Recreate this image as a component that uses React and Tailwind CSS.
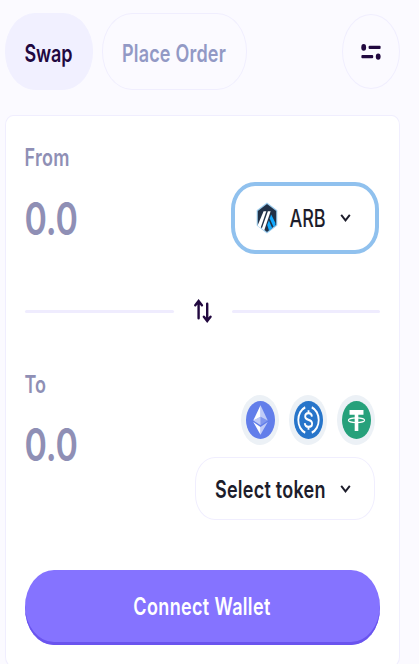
import React, { useState } from "react";
import clsx from "clsx";

const Label = ({ className, children }) => (
  <span
    className={clsx(
      "inline-block whitespace-nowrap leading-6 scale-y-[1.33]",
      className
    )}
  >
    {children}
  </span>
);

const Chevron = () => (
  <svg width="11" height="10" viewBox="0 0 11 10" fill="none">
    <path d="M1.2 1.8 5.5 7.4 9.8 1.8" stroke="#1d1d2b" strokeWidth="1.9" />
  </svg>
);

const SettingsIcon = () => (
  <svg width="20" height="16" viewBox="0 0 20 16" fill="#21083f">
    <ellipse cx="2.7" cy="3.4" rx="2.4" ry="3.3" />
    <rect x="7.6" y="1.8" width="12" height="3.2" rx="1" />
    <rect x="0.4" y="11" width="11.8" height="3.2" rx="1" />
    <ellipse cx="17.2" cy="12.6" rx="2.4" ry="3.2" />
  </svg>
);

const SwapArrows = () => (
  <svg
    width="18"
    height="24"
    viewBox="0 0 18 24"
    fill="none"
    stroke="#21083f"
    strokeWidth="2.4"
    strokeLinecap="round"
  >
    <path d="M4.6 19.2V2.2M1.3 6.2 4.6 2 7.9 6.2" />
    <path d="M13.2 4.8V21.8M9.9 17.8 13.2 22 16.5 17.8" />
  </svg>
);

const ArbIcon = () => (
  <svg width="22" height="32" viewBox="0 0 22 32">
    <path d="M11 .5 21.3 8.2V23.5L11 31.5 .7 23.5V8.2Z" fill="#9dccec" />
    <path d="M11 2 20.2 8.9V22.8L11 30 1.8 22.8V8.9Z" fill="#213147" />
    <path d="M15.2 12.5 19.4 21V23.5L17.6 25 13.7 16.5Z" fill="#12aaff" />
    <path d="M12.9 18.5 16.2 26 13 28.5 11.2 23Z" fill="#12aaff" />
    <path d="M7.6 9.2H10.3L4.6 26 1.9 24V22.8Z" fill="#fff" />
    <path d="M11.9 9.2H14.6L8.2 28.5 5.8 26.6Z" fill="#fff" />
  </svg>
);

const EthIcon = () => (
  <svg
    className="h-[38px] w-[29px]"
    viewBox="0 0 32 32"
    preserveAspectRatio="none"
  >
    <circle cx="16" cy="16" r="16" fill="#627eea" />
    <path d="M16 3.5V13.2L24 16.5Z" fill="#fff" fillOpacity=".6" />
    <path d="M16 3.5 8 16.5 16 13.2Z" fill="#fff" />
    <path d="M16 21.8V28.4L24 17.6Z" fill="#fff" fillOpacity=".6" />
    <path d="M16 28.4V21.8L8 17.6Z" fill="#fff" />
    <path d="M16 20.4 24 16.5 16 13.2Z" fill="#fff" fillOpacity=".2" />
    <path d="M8 16.5 16 20.4V13.2Z" fill="#fff" fillOpacity=".6" />
  </svg>
);

const UsdcIcon = () => (
  <svg
    className="h-[38px] w-[29px]"
    viewBox="0 0 32 32"
    preserveAspectRatio="none"
    fill="none"
    stroke="#fff"
    strokeWidth="2"
  >
    <circle cx="16" cy="16" r="16" fill="#2775ca" stroke="none" />
    <path d="M12.4 5.3a11.3 11.3 0 0 0 0 21.4M19.6 5.3a11.3 11.3 0 0 1 0 21.4" />
    <path d="M19.8 13.1c-.2-2-1.8-2.9-3.8-2.9-2.2 0-3.7 1.1-3.7 2.8 0 4 7.7 1.7 7.7 5.9 0 1.8-1.6 2.9-4 2.9-2.3 0-3.9-1-4.1-3.1M16 7.8v2.4M16 21.8v2.4" />
  </svg>
);

const UsdtIcon = () => (
  <svg
    className="h-[38px] w-[29px]"
    viewBox="0 0 32 32"
    preserveAspectRatio="none"
  >
    <circle cx="16" cy="16" r="16" fill="#26a17b" />
    <path d="M8.3 7.6H23.7V11.5H18V25.3H14V11.5H8.3Z" fill="#fff" />
    <ellipse
      cx="16"
      cy="16.2"
      rx="9"
      ry="2"
      fill="none"
      stroke="#fff"
      strokeWidth="1.1"
    />
  </svg>
);

const tokens = [
  { name: "ETH", icon: <EthIcon /> },
  { name: "USDC", icon: <UsdcIcon /> },
  { name: "USDT", icon: <UsdtIcon /> },
];

const tabs = [
  { name: "Swap", width: "w-[88px]", tracking: "tracking-[-0.1px]" },
  { name: "Place Order", width: "w-[145px]", tracking: "tracking-[0.2px]" },
];

const App = () => {
  const [activeTab, setActiveTab] = useState("Swap");

  return (
    <div className="h-[664px] w-[419px] overflow-hidden bg-[#fbfaff] pl-[4.5px] pr-[19px] pt-[13px] font-['Inter',sans-serif] font-semibold">
      <div className="flex items-center justify-between">
        <div className="flex gap-[9px]">
          {tabs.map((tab) => (
            <button
              key={tab.name}
              onClick={() => setActiveTab(tab.name)}
              className={clsx(
                "flex h-[77px] items-center justify-center rounded-[30px/38px] border pt-1",
                tab.width,
                activeTab === tab.name
                  ? "border-[#f1f0ff] bg-[#f1f0ff] text-[#21083f]"
                  : "border-[#f0eefe] text-[#9299c5]"
              )}
            >
              <Label className={clsx("text-[18px]", tab.tracking)}>
                {tab.name}
              </Label>
            </button>
          ))}
        </div>
        <button className="flex h-[75px] w-[58px] items-center justify-center rounded-[50%] border border-[#f0eefe]">
          <SettingsIcon />
        </button>
      </div>

      <div className="mt-[25px] h-[552px] rounded-[8px/10px] border border-[#f0eefe] bg-white pl-[19px] pr-[19.5px] pt-[30px]">
        <div className="flex h-[108px] justify-between">
          <div className="flex flex-col items-start text-[#8f8fb5]">
            <Label className="text-[18px] tracking-[0.3px]">From</Label>
            <Label className="mt-[37px] text-[34px] tracking-[-0.2px]">
              0.0
            </Label>
          </div>
          <button className="mr-[0.5px] mt-[36px] flex h-[72px] w-[148px] items-center rounded-[24px/27px] border-4 border-[#90c1ee] pl-[21px]">
            <ArbIcon />
            <Label className="ml-[10px] mt-px w-[39px] text-[18px] font-medium text-[#1d1d2b]">
              ARB
            </Label>
            <span className="ml-[13px]">
              <Chevron />
            </span>
          </button>
        </div>

        <div className="mt-[45px] flex h-6 items-center justify-between">
          <div className="h-[3px] w-[149px] rounded-full bg-[#efecfe]" />
          <SwapArrows />
          <div className="h-[3px] w-[148px] rounded-full bg-[#efecfe]" />
        </div>

        <div className="mt-[50px] flex justify-between">
          <div className="flex flex-col items-start text-[#8f8fb5]">
            <Label className="text-[18px]">To</Label>
            <Label className="mt-[36px] text-[34px] tracking-[-0.2px]">
              0.0
            </Label>
          </div>
          <div className="mr-[4.5px] mt-[22px] flex flex-col items-end">
            <div className="flex gap-[10px]">
              {tokens.map((token) => (
                <div
                  key={token.name}
                  className="flex h-[50px] w-[38px] items-center justify-center rounded-[50%] bg-[#ecf1f6]"
                >
                  {token.icon}
                </div>
              ))}
            </div>
            <button className="mt-[12px] flex h-[63px] w-[180px] items-center justify-between rounded-[20px/25px] border border-[#f0eefe] pl-[19px] pr-[23px] text-[#1d1d2b]">
              <Label className="mt-[2px] text-[18px] tracking-[0.25px]">
                Select token
              </Label>
              <Chevron />
            </button>
          </div>
        </div>

        <button className="mt-[50px] flex h-[75px] w-[355px] items-center justify-center rounded-[29px/37px] bg-[#8573ff] text-white shadow-[inset_0_-3px_0_#6a54ee]">
          <Label className="-mt-px text-[18px] tracking-[0.35px]">
            Connect Wallet
          </Label>
        </button>
      </div>
    </div>
  );
};

export default App;
